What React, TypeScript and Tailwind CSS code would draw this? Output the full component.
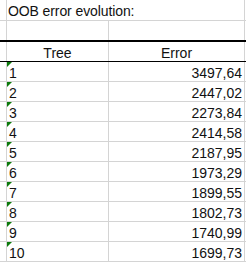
const rows: [string, string][] = [
  ['1', '3497,64'],
  ['2', '2447,02'],
  ['3', '2273,84'],
  ['4', '2414,58'],
  ['5', '2187,95'],
  ['6', '1973,29'],
  ['7', '1899,55'],
  ['8', '1802,73'],
  ['9', '1740,99'],
  ['10', '1699,73'],
];

function Marker() {
  return (
    <svg className="absolute left-0 top-0" width="5" height="5" viewBox="0 0 5 5">
      <polygon points="0,0 5,0 0,5" fill="#0b7a0b" />
    </svg>
  );
}

export default function App() {
  return (
    <div
      className="w-[246px] h-[262px] overflow-hidden bg-white text-[14px] leading-[19px] text-[#111]"
      style={{ fontFamily: '"Liberation Sans", Arial, sans-serif' }}
    >
      {/* title row */}
      <div className="flex h-[21px] border-b border-[#d4d4d4]">
        <div className="w-[7px] shrink-0 border-r border-[#d4d4d4]" />
        <div className="w-[238px] shrink-0 border-r border-[#d4d4d4] pl-[1px] pt-[2px] whitespace-nowrap tracking-[-0.1px]">
          OOB error evolution:
        </div>
        <div className="flex-1" />
      </div>

      {/* empty row with thick border below */}
      <div className="flex h-[21px] border-b-2 border-black">
        <div className="w-[7px] shrink-0 border-r border-[#d4d4d4]" />
        <div className="w-[102px] shrink-0 border-r border-[#d4d4d4]" />
        <div className="w-[136px] shrink-0 border-r border-[#d4d4d4]" />
        <div className="flex-1" />
      </div>

      {/* header */}
      <div className="flex h-[20px] border-b border-black">
        <div className="w-[7px] shrink-0 border-r border-[#d4d4d4]" />
        <div className="w-[102px] shrink-0 border-r border-[#d4d4d4] pt-[2px] text-center">Tree</div>
        <div className="w-[136px] shrink-0 border-r border-[#d4d4d4] pt-[2px] text-center">Error</div>
        <div className="flex-1" />
      </div>

      {rows.map(([tree, err]) => (
        <div key={tree} className="flex h-[20px] border-b border-[#d4d4d4]">
          <div className="w-[7px] shrink-0 border-r border-[#d4d4d4]" />
          <div className="relative w-[102px] shrink-0 border-r border-[#d4d4d4] pl-[2px] pt-[2px]">
            <Marker />
            {tree}
          </div>
          <div className="w-[136px] shrink-0 border-r border-[#d4d4d4] pr-[2px] pt-[2px] text-right">
            {err}
          </div>
          <div className="flex-1" />
        </div>
      ))}
    </div>
  );
}
